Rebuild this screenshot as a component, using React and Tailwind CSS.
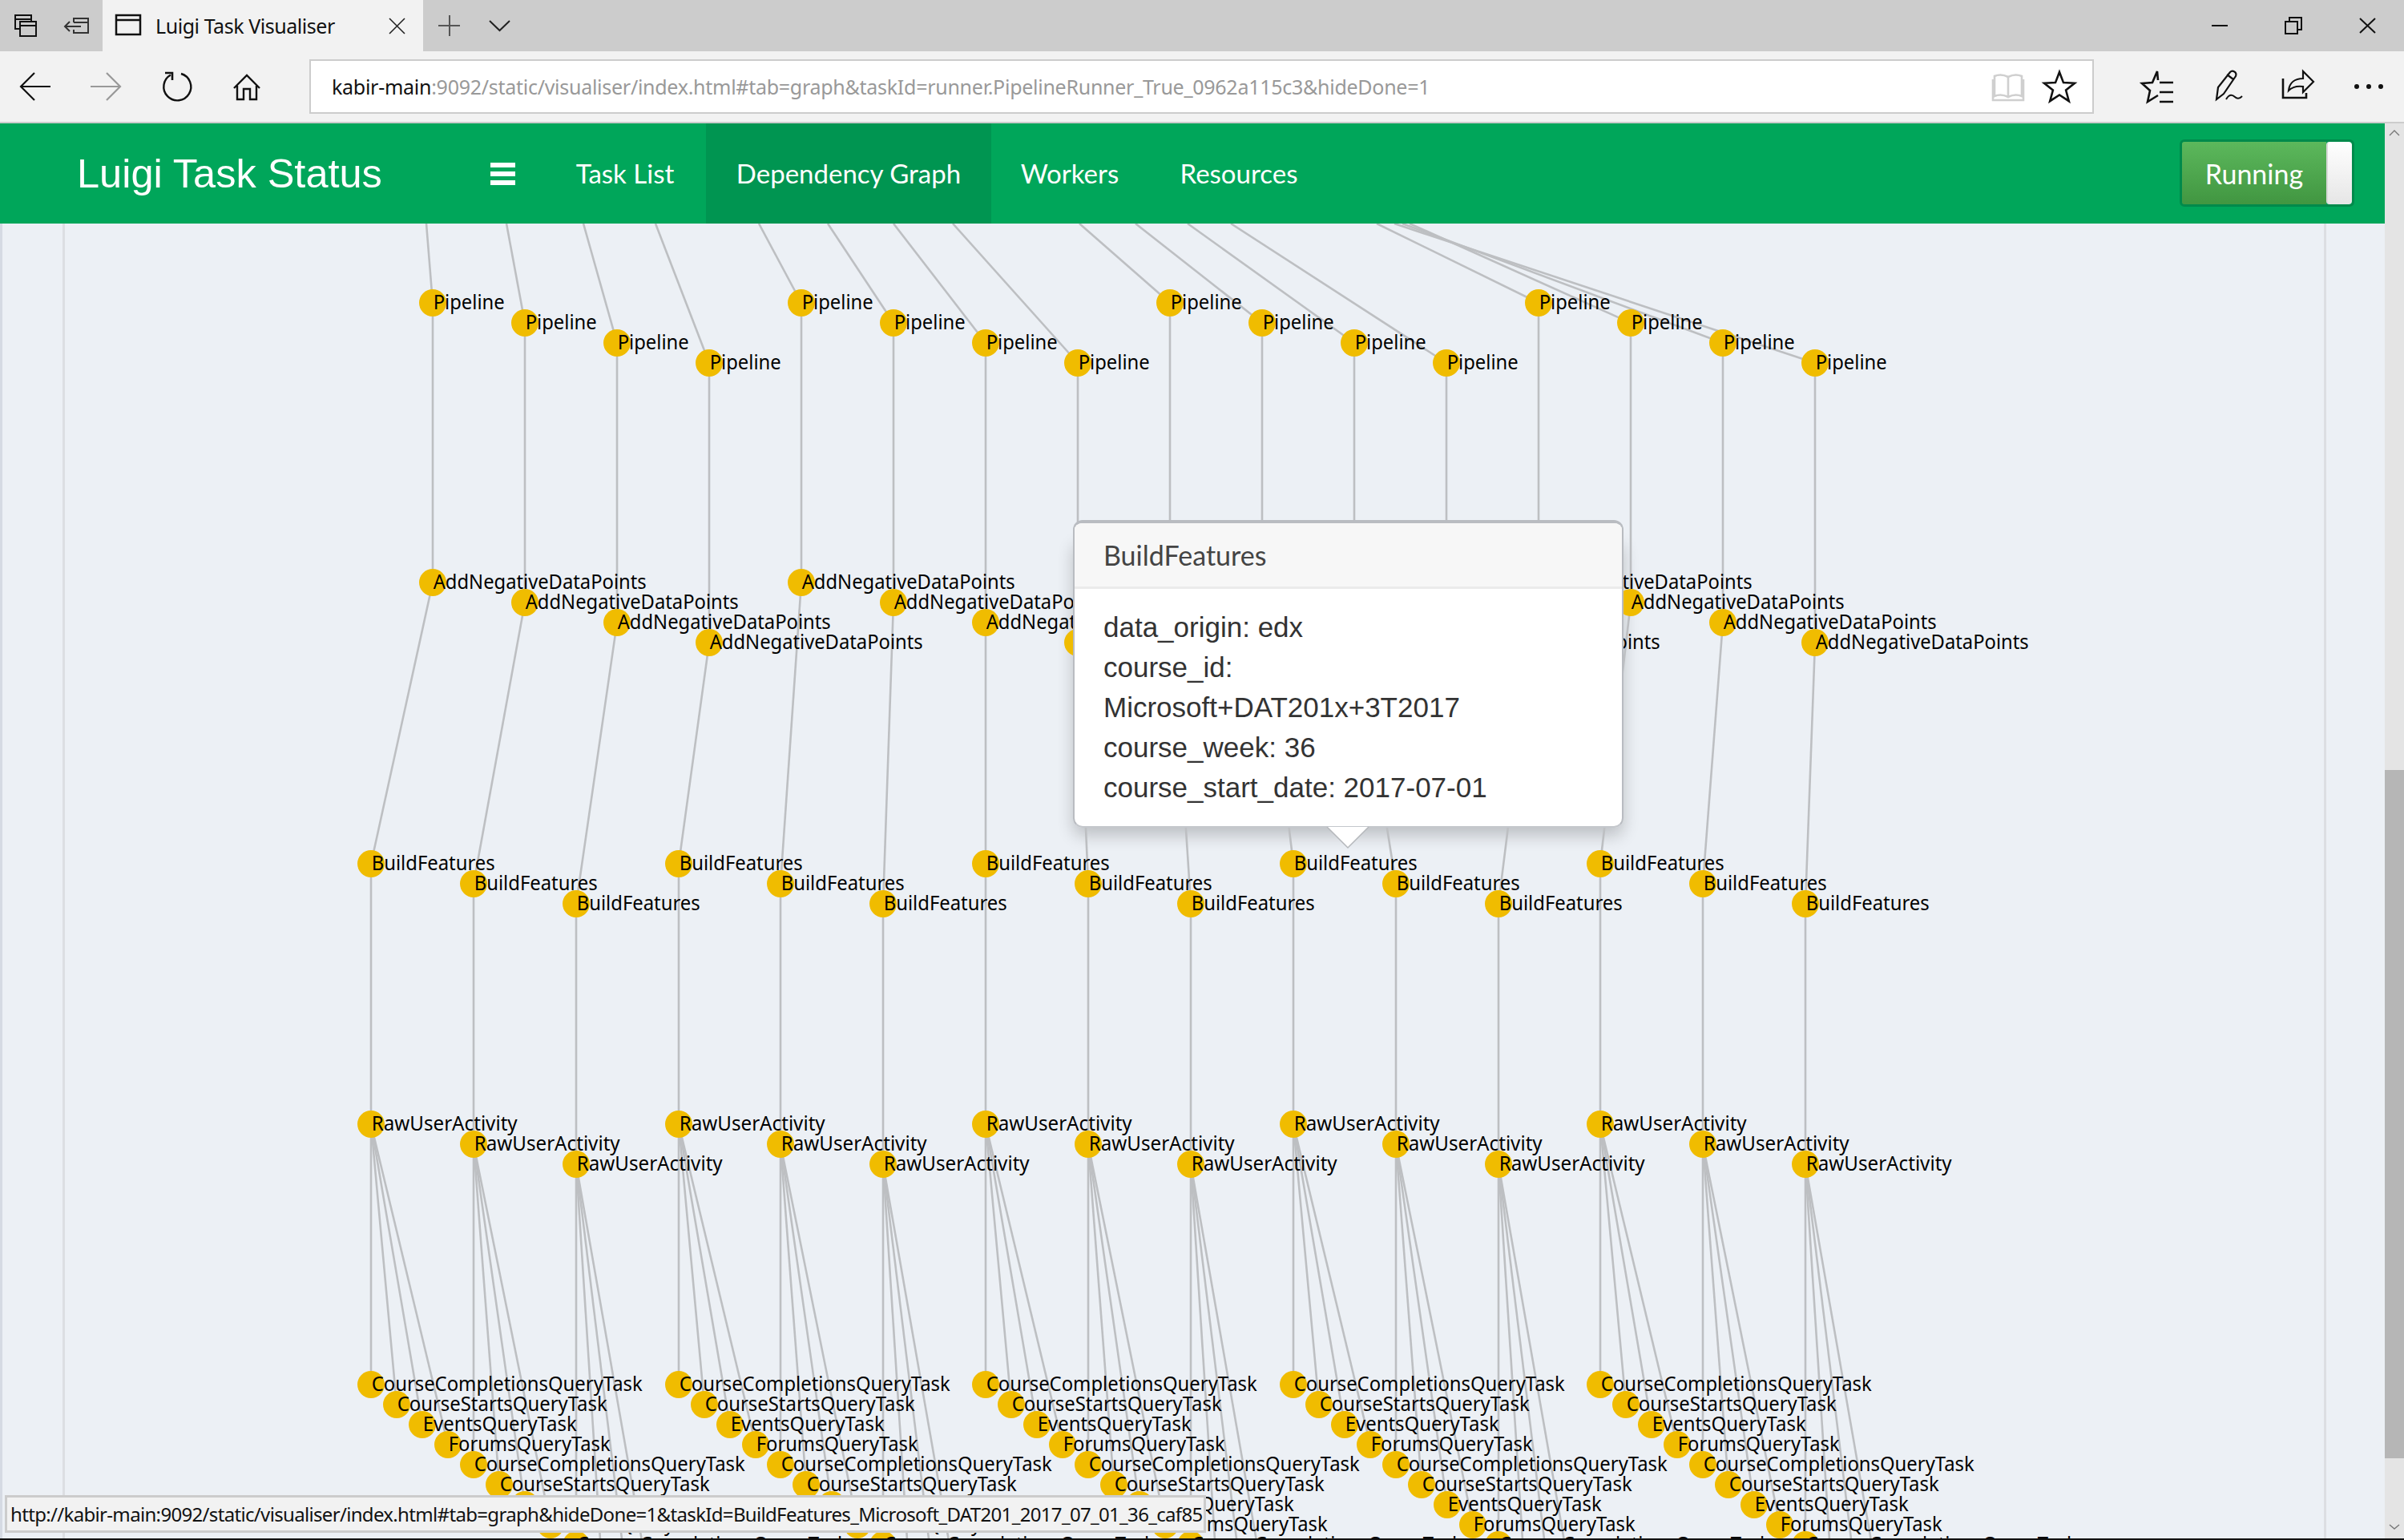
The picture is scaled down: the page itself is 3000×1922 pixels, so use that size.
const PIPE_TOPS = [532, 632, 728, 818, 947, 1033, 1115, 1189, 1347, 1417, 1482, 1536, 1718, 1759, 1750, 1740];
const BF_MAP = [0, 1, 2, 3, 4, 5, 6, 7, 8, 9, 10, null, 11, 12, 13, 14];
const WIDTHS = {
  Pipeline: 89,
  AddNegativeDataPoints: 266,
  BuildFeatures: 154,
  RawUserActivity: 182,
  CourseCompletionsQueryTask: 338,
  CourseStartsQueryTask: 262,
  EventsQueryTask: 192,
  ForumsQueryTask: 202,
};
const QUERY = ["CourseCompletionsQueryTask", "CourseStartsQueryTask", "EventsQueryTask", "ForumsQueryTask"];

const pipelineX = (i) => 540 + 115 * i;
const stepY = (i, n) => i % n;
const bfX = (i) => Math.round(463 + 127.87 * i);

function buildGraph() {
  const edges = [];
  const nodes = [];
  for (let i = 0; i < 16; i++) {
    const x = pipelineX(i);
    const py = 378 + 25 * stepY(i, 4);
    const ay = 727 + 25 * stepY(i, 4);
    edges.push([PIPE_TOPS[i], 279, x, py]);
    edges.push([x, py, x, ay]);
    const j = BF_MAP[i];
    if (j !== null) edges.push([x, ay, bfX(j), 1078 + 25 * stepY(j, 3)]);
    nodes.push([x, py, "Pipeline"]);
    nodes.push([x, ay, "AddNegativeDataPoints"]);
  }
  for (let i = 0; i < 15; i++) {
    const x = bfX(i);
    const by = 1078 + 25 * stepY(i, 3);
    const ry = 1403 + 25 * stepY(i, 3);
    edges.push([x, by, x, ry]);
    nodes.push([x, by, "BuildFeatures"]);
    nodes.push([x, ry, "RawUserActivity"]);
    const r = i % 3;
    for (let q = 0; q < 4; q++) {
      const k = r * 4 + q;
      const qx = Math.round(x + 32 * q);
      const qy = 1728 + 25 * k;
      edges.push([x, ry, qx, qy]);
      nodes.push([qx, qy, QUERY[q]]);
    }
  }
  return { edges, nodes };
}

function Graph() {
  const { edges, nodes } = buildGraph();
  return (
    <svg className="absolute left-0 top-0 font-['Noto_Sans',sans-serif]" width="2976" height="1641" viewBox="0 279 2976 1641">
      {edges.map((e, i) => (
        <line key={i} x1={e[0]} y1={e[1]} x2={e[2]} y2={e[3]} stroke="#bdbfc2" strokeWidth="2.6" />
      ))}
      {nodes.map((n, i) => (
        <circle key={i} cx={n[0]} cy={n[1]} r="17" fill="#f0bc00" />
      ))}
      {nodes.map((n, i) => (
        <text key={i} x={n[0] + 0.7} y={n[1] + 8} fontSize="25" fill="#000" textLength={WIDTHS[n[2]]} lengthAdjust="spacingAndGlyphs">
          {n[2]}
        </text>
      ))}
    </svg>
  );
}

function starPoints(cx, cy, R, r) {
  const pts = [];
  for (let i = 0; i < 10; i++) {
    const a = -Math.PI / 2 + (i * Math.PI) / 5;
    const m = i % 2 === 0 ? R : r;
    pts.push(`${(cx + m * Math.cos(a)).toFixed(1)},${(cy + m * Math.sin(a)).toFixed(1)}`);
  }
  return pts.join(" ");
}

function TabBar() {
  return (
    <div className="flex h-16 bg-[#cccccc] font-['Noto_Sans',sans-serif]">
      <svg width="128" height="64" viewBox="0 0 128 64" fill="none" stroke="#111" strokeWidth="2">
        <path d="M25 36H19V19H39V27M19 24H39" />
        <rect x="25" y="27" width="20" height="18" />
        <path d="M25 32H45" />
        <g stroke="#333">
          <path d="M92 28V23H110V41H92V37M92 28H110" />
          <path d="M81 33H101M87 27L81 33L87 39" />
        </g>
      </svg>
      <div className="flex h-16 w-[400px] items-center bg-[#f2f2f2]">
        <svg width="66" height="64" viewBox="128 0 66 64" fill="none" stroke="#111" strokeWidth="2.5" className="shrink-0">
          <rect x="145" y="19" width="30" height="24" />
          <path d="M145 25H175" />
        </svg>
        <span className="flex-1 whitespace-nowrap text-[25px] leading-none tracking-[-0.45px] text-[#111]">Luigi Task Visualiser</span>
        <svg width="23" height="23" viewBox="0 0 23 23" stroke="#222" strokeWidth="1.6" className="mr-[21px] shrink-0">
          <path d="M2 2L21 21M21 2L2 21" />
        </svg>
      </div>
      <svg width="128" height="64" viewBox="528 0 128 64" fill="none" stroke="#555" strokeWidth="2">
        <path d="M561 19V45M547 32H574" />
        <path d="M611 26L623.5 38L636 26" stroke="#222" />
      </svg>
      <div className="flex-1" />
      <svg width="280" height="64" viewBox="2720 0 280 64" fill="none" stroke="#111" strokeWidth="2">
        <path d="M2760 32H2780" />
        <rect x="2852" y="27" width="15" height="15" />
        <path d="M2857 27V22H2872V37H2867" />
        <path d="M2945 23L2964 41M2964 23L2945 41" />
      </svg>
    </div>
  );
}

function Toolbar() {
  return (
    <div className="flex h-[90px] items-start border-b-2 border-[#cccccc] bg-[#f2f2f2] font-['Noto_Sans',sans-serif]">
      <svg width="386" height="88" viewBox="0 64 386 88" fill="none" stroke="#111" strokeWidth="2.2" className="shrink-0">
        <path d="M26 108H63M43 91L26 108L43 125" />
        <path d="M113 108H150M133 91L150 108L133 125" stroke="#999" />
        <path d="M213 93.5A17 17 0 1 0 226 92" strokeWidth="2.4" />
        <path d="M206 91H215V100" strokeWidth="2.6" />
        <path d="M292 110L308 94L324 110M296 107V124H304V111H312V124H320V107" strokeWidth="2.4" />
      </svg>
      <div className="mt-[10px] flex h-[68px] w-[2227px] items-center border-2 border-[#cccccc] bg-white pl-[26px]">
        <span className="whitespace-nowrap pt-[1px] text-[25px] tracking-[-0.27px] text-[#999]">
          <span className="text-[#111]">kabir-main</span>:9092/static/visualiser/index.html#tab=graph&amp;taskId=runner.PipelineRunner_True_0962a115c3&amp;hideDone=1
        </span>
        <svg width="141" height="64" viewBox="2470 76 141 64" fill="none" className="ml-auto shrink-0">
          <path d="M2506 96C2500 93 2494 93 2489 95V120C2494 118 2500 118 2506 121C2512 118 2518 118 2523 120V95C2518 93 2512 93 2506 96ZM2506 96V121M2487 99V125H2525V99" stroke="#cfcfcf" strokeWidth="2.6" />
          <polygon points={starPoints(2570, 110, 20, 8.5)} stroke="#111" strokeWidth="2.6" />
        </svg>
      </div>
      <svg width="387" height="88" viewBox="2613 64 387 88" fill="none" stroke="#111" strokeWidth="2.6" className="shrink-0">
        <path d="M2693 100L2692 89L2686 103L2673 104L2683 113L2680 127L2693 119" />
        <path d="M2695 103H2712M2695 115H2712M2695 127H2712" />
        <path d="M2766 124L2768 109L2783 90C2786 87 2792 90 2790 95L2775 117ZM2779 93L2787 99" strokeWidth="2.2" />
        <path d="M2778 124C2782 117 2786 118 2789 121C2792 124 2795 123 2798 120" strokeWidth="2" />
        <path d="M2849 98V122H2878V116" />
        <path d="M2856 113C2857 103 2864 98 2874 98V89L2887 102L2874 115V108C2866 107 2860 109 2856 113Z" strokeWidth="2.2" />
        <circle cx="2941" cy="108" r="3" fill="#111" stroke="none" />
        <circle cx="2956" cy="108" r="3" fill="#111" stroke="none" />
        <circle cx="2971" cy="108" r="3" fill="#111" stroke="none" />
      </svg>
    </div>
  );
}

function NavItem({ w, active, children }) {
  return (
    <div className={`flex items-center justify-center whitespace-nowrap text-[33px] text-white ${w} ${active ? "bg-[#009551]" : ""}`}>
      {children}
    </div>
  );
}

function Nav() {
  return (
    <div className="flex h-[125px] bg-[#00a65a] font-['Lato',sans-serif]">
      <div className="flex w-[612px] items-center pl-[96px] pt-[1px] font-['Liberation_Sans',sans-serif] text-[50.5px] text-white">Luigi Task Status</div>
      <div className="flex w-[67px] items-center">
        <div className="flex w-[31px] flex-col gap-[5px]">
          <div className="h-[6px] bg-white" />
          <div className="h-[6px] bg-white" />
          <div className="h-[6px] bg-white" />
        </div>
      </div>
      <NavItem w="w-[202px]">Task List</NavItem>
      <NavItem w="w-[356px]" active>Dependency Graph</NavItem>
      <NavItem w="w-[196px]">Workers</NavItem>
      <NavItem w="w-[226px]">Resources</NavItem>
      <div className="ml-auto mr-[38px] mt-[20px] flex h-[84px] w-[218px] overflow-hidden rounded-[6px] border-[3px] border-[#008a4b]">
        <div className="flex flex-1 items-center justify-center bg-gradient-to-b from-[#5cb85c] to-[#419641] text-[34px] text-white">Running</div>
        <div className="w-[32px] rounded-[4px] border-l-2 border-[#d8d8d8] bg-gradient-to-b from-white to-[#e6e6e6]" />
      </div>
    </div>
  );
}

function Popup() {
  const lines = ["data_origin: edx", "course_id:", "Microsoft+DAT201x+3T2017", "course_week: 36", "course_start_date: 2017-07-01"];
  return (
    <div className="absolute left-[1339px] top-[370px] w-[687px]">
      <div className="h-[384px] overflow-hidden rounded-[12px] border-2 border-t-[4px] border-[#b9bcc1] border-b-[#c4c7cc] bg-white text-[#333]">
        <div className="flex h-[82px] items-center border-b-[3px] border-[#ebebeb] bg-[#f7f7f7] pl-[36px] font-['Lato',sans-serif] text-[34px] text-[#444]">BuildFeatures</div>
        <div className="pl-[36px] pt-[23px] font-['Liberation_Sans',sans-serif] text-[35px] leading-[50px]">
          {lines.map((l) => (
            <div key={l} className="whitespace-nowrap">{l}</div>
          ))}
        </div>
      </div>
      <div className="absolute left-0 right-0 top-[20px] -z-10 h-[364px] rounded-[12px] shadow-[0_10px_20px_rgba(0,0,0,0.2)]" />
      <svg className="absolute left-[316px] top-[383px]" width="54" height="28" viewBox="0 0 54 28">
        <polygon points="1,0 53,0 27,26" fill="#fff" />
        <path d="M1 0L27 26L53 0" fill="none" stroke="#b5b8bc" strokeWidth="1.5" />
      </svg>
    </div>
  );
}

function StatusBar() {
  return (
    <div className="absolute bottom-[7px] left-[6px] flex h-[47px] w-[1499px] items-center whitespace-nowrap border-[3px] border-[#cccccc] bg-[#f2f2f2] pl-[4px] font-['Noto_Sans',sans-serif] text-[24px] tracking-[-0.67px] text-[#111]">
      http://kabir-main:9092/static/visualiser/index.html#tab=graph&amp;hideDone=1&amp;taskId=BuildFeatures_Microsoft_DAT201_2017_07_01_36_caf85
    </div>
  );
}

function Scrollbar() {
  return (
    <div className="flex w-6 flex-col bg-[#e4e4e4]">
      <svg width="24" height="24" viewBox="0 0 24 24" fill="none" stroke="#777" strokeWidth="1.4" className="mt-[2px]">
        <path d="M6 13L12 7L18 13" />
      </svg>
      <div className="mt-[781px] h-[859px] bg-[#b6b6b6]" />
      <div className="flex flex-1 items-end justify-center pb-[10px]">
        <svg width="14" height="8" viewBox="0 0 14 8" fill="none" stroke="#777" strokeWidth="1.4">
          <path d="M1 1L7 6L13 1" />
        </svg>
      </div>
    </div>
  );
}

export default function App() {
  return (
    <div className="flex h-[1922px] w-[3000px] flex-col overflow-hidden bg-[#ecf0f5]">
      <TabBar />
      <Toolbar />
      <div className="flex min-h-0 flex-1">
        <div className="flex min-w-0 flex-1 flex-col">
          <Nav />
          <div className="relative isolate min-h-0 flex-1 overflow-hidden">
            <div className="flex h-full border-l-[3px] border-[#d5dae3]">
              <div className="ml-[75px] mr-[73px] flex-1 border-x-[3px] border-[#dcdee2]" />
            </div>
            <Graph />
            <Popup />
            <StatusBar />
          </div>
        </div>
        <Scrollbar />
      </div>
      <div className="h-[2px] shrink-0 bg-[#111]" />
    </div>
  );
}
